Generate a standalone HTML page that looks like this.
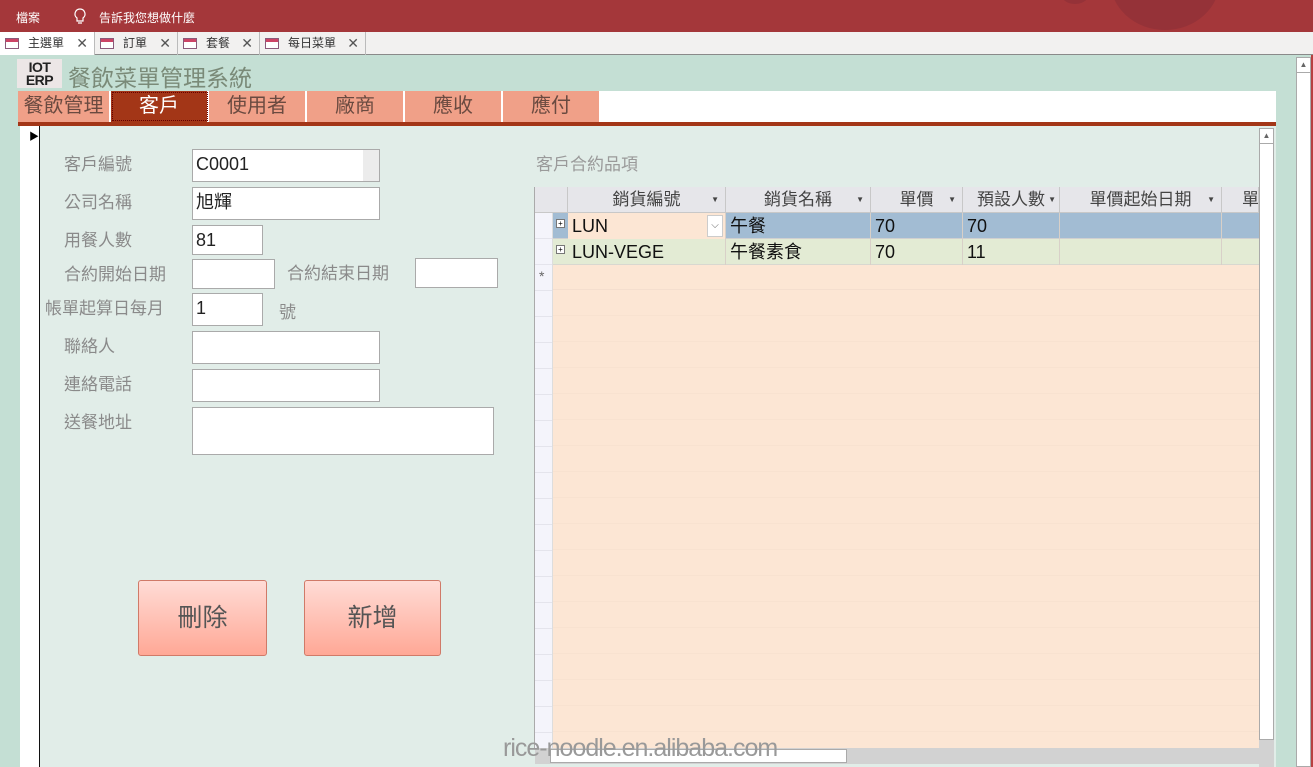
<!DOCTYPE html>
<html><head><meta charset="utf-8"><style>
*{box-sizing:border-box;margin:0;padding:0}
body{width:1313px;height:767px;overflow:hidden;background:#c4dfd4;font-family:"Liberation Sans","Noto Sans CJK TC",sans-serif;position:relative}
.a{position:absolute}
.top{left:0;top:0;width:1313px;height:32px;background:#a4373a;color:#fff;font-size:12px}
.tabs{left:0;top:32px;width:1313px;height:23px;background:#f2f1f0;border-bottom:1px solid #8a8a8a}
.dt{top:0;height:23px;border-right:1px solid #bbb;font-size:12px;color:#333;line-height:23px;padding-left:28px}
.dt i{position:absolute;left:5px;top:6px;width:14px;height:11px;border:1px solid #8a5a7a;background:linear-gradient(#c46 0 3px,#fff 3px)}
.dt b{position:absolute;right:6px;top:0;font-weight:normal;color:#555;font-size:14px}
.ft{top:91px;height:31px;background:#f0a088;color:#6a4a40;font-size:20px;text-align:center;line-height:30px;border-right:2px solid #fff}
.lab{color:#8a8a8a;font-size:17px}
.in{background:#fff;border:1px solid #aaa;font-size:18px;color:#222;padding-left:3px;line-height:28px}
.hd{top:187px;height:26px;background:#e6e6ea;border-right:1px solid #c8c8c8;border-bottom:1px solid #c8c8c8;font-size:17px;color:#444;text-align:center;line-height:26px}
.hd s{position:absolute;right:6px;top:0;text-decoration:none;font-size:8px;color:#444}
.c{font-size:18px;color:#111;line-height:26px;padding-left:4px;border-right:1px solid #d8d0c8}
.btn{top:580px;height:76px;border:1px solid #d07a68;border-radius:3px;background:linear-gradient(#ffdcd6,#ffa896);color:#555;font-size:25px;text-align:center;line-height:74px}
</style></head><body>
<div class="a top">
 <span class="a" style="left:16px;top:9px">檔案</span>
 <svg class="a" style="left:73px;top:8px" width="14" height="17" viewBox="0 0 14 17"><path d="M7 1a5 5 0 0 0-3 9v3h6v-3a5 5 0 0 0-3-9zM5 15h4" fill="none" stroke="#fff" stroke-width="1.2"/></svg>
 <span class="a" style="left:99px;top:9px">告訴我您想做什麼</span>
 <div class="a" style="left:1110px;top:-70px;width:110px;height:100px;border-radius:50%;background:#953238"></div>
 <div class="a" style="left:1060px;top:-20px;width:30px;height:24px;border-radius:50%;border:4px solid #953238"></div>
</div>
<div class="a tabs">
 <div class="a dt" style="left:0;width:95px;background:#fff"><i></i>主選單<b>✕</b></div>
 <div class="a dt" style="left:95px;width:83px"><i></i>訂單<b>✕</b></div>
 <div class="a dt" style="left:178px;width:82px"><i></i>套餐<b>✕</b></div>
 <div class="a dt" style="left:260px;width:106px"><i></i>每日菜單<b>✕</b></div>
</div>
<div class="a" style="left:17px;top:59px;width:45px;height:29px;background:#ece6e6;font:bold 14px/13px 'Liberation Sans',sans-serif;color:#222;text-align:center;padding-top:2px;letter-spacing:-0.5px">IOT<br>ERP</div>
<div class="a" style="left:68px;top:59px;font-size:23px;color:#7a8a78">餐飲菜單管理系統</div>
<div class="a" style="left:1296px;top:57px;width:15px;height:710px;background:#fff;border:1px solid #aaa"></div>
<div class="a" style="left:1296px;top:57px;width:15px;height:16px;border:1px solid #aaa;background:#fff;font-size:8px;text-align:center;color:#666;line-height:14px">▲</div>
<div class="a" style="left:1311px;top:55px;width:2px;height:712px;background:#b84040"></div>
<div class="a" style="left:18px;top:91px;width:1258px;height:31px;background:#fff"></div>
<div class="a ft" style="left:18px;width:93px">餐飲管理</div>
<div class="a ft" style="left:111px;width:98px;background:#a33617;color:#fff;outline:1px dotted #600;outline-offset:-2px">客戶</div>
<div class="a ft" style="left:209px;width:98px">使用者</div>
<div class="a ft" style="left:307px;width:98px">廠商</div>
<div class="a ft" style="left:405px;width:98px">應收</div>
<div class="a ft" style="left:503px;width:98px">應付</div>
<div class="a" style="left:18px;top:122px;width:1258px;height:4px;background:#a33617"></div>
<div class="a" style="left:20px;top:126px;width:1256px;height:641px;background:#e1ede8"></div>
<div class="a" style="left:20px;top:126px;width:20px;height:641px;background:#fff;border-right:1px solid #111"></div>
<div class="a" style="left:29px;top:128px;font-size:10px">▶</div>
<div class="a lab" style="left:64px;top:150px">客戶編號</div>
<div class="a in" style="left:192px;top:149px;width:188px;height:33px">C0001<span class="a" style="right:0;top:0;width:16px;height:31px;background:#ececec"></span></div>
<div class="a lab" style="left:64px;top:188px">公司名稱</div>
<div class="a in" style="left:192px;top:187px;width:188px;height:33px">旭輝</div>
<div class="a lab" style="left:64px;top:226px">用餐人數</div>
<div class="a in" style="left:192px;top:225px;width:71px;height:30px">81</div>
<div class="a lab" style="left:64px;top:260px">合約開始日期</div>
<div class="a in" style="left:192px;top:259px;width:83px;height:30px"></div>
<div class="a lab" style="left:287px;top:259px">合約結束日期</div>
<div class="a in" style="left:415px;top:258px;width:83px;height:30px"></div>
<div class="a lab" style="left:45px;top:294px">帳單起算日每月</div>
<div class="a in" style="left:192px;top:293px;width:71px;height:33px">1</div>
<div class="a lab" style="left:279px;top:298px">號</div>
<div class="a lab" style="left:64px;top:332px">聯絡人</div>
<div class="a in" style="left:192px;top:331px;width:188px;height:33px"></div>
<div class="a lab" style="left:64px;top:370px">連絡電話</div>
<div class="a in" style="left:192px;top:369px;width:188px;height:33px"></div>
<div class="a lab" style="left:64px;top:408px">送餐地址</div>
<div class="a in" style="left:192px;top:407px;width:302px;height:48px"></div>
<div class="a btn" style="left:138px;width:129px">刪除</div>
<div class="a btn" style="left:304px;width:137px">新增</div>
<div class="a" style="left:536px;top:150px;font-size:17px;color:#9a9a9a">客戶合約品項</div>
<div class="a" style="left:534px;top:187px;width:726px;height:562px;background:#fce6d4;border:1px solid #aaa"></div>
<div class="a" style="left:535px;top:213px;width:18px;height:535px;background:repeating-linear-gradient(#f4f4fb 0 25px,#e4e4ec 25px 26px);border-right:1px solid #ddd"></div>
<div class="a" style="left:553px;top:290px;width:706px;height:458px;background:repeating-linear-gradient(#fce6d4 0 25px,#f8e2d0 25px 26px)"></div>
<div class="a hd" style="left:535px;width:33px"></div>
<div class="a hd" style="left:568px;width:158px">銷貨編號<s>▼</s></div>
<div class="a hd" style="left:726px;width:145px">銷貨名稱<s>▼</s></div>
<div class="a hd" style="left:871px;width:92px">單價<s>▼</s></div>
<div class="a hd" style="left:963px;width:97px">預設人數<s style="right:3px">▼</s></div>
<div class="a hd" style="left:1060px;width:162px">單價起始日期<s>▼</s></div>
<div class="a hd" style="left:1222px;width:37px;text-align:left;padding-left:20px;overflow:hidden">單</div>
<div class="a" style="left:553px;top:213px;width:706px;height:26px;background:#a2bcd3;border-bottom:1px solid #d0d0d0"></div>
<div class="a c" style="left:568px;top:213px;width:158px;height:26px;background:#fce6d4">LUN<span class="a" style="right:2px;top:2px;width:16px;height:22px;background:#fff;border:1px solid #ccc;font-size:10px;line-height:20px;text-align:center;color:#666">⌵</span></div>
<div class="a c" style="left:726px;top:213px;width:145px;height:26px">午餐</div>
<div class="a c" style="left:871px;top:213px;width:92px;height:26px">70</div>
<div class="a c" style="left:963px;top:213px;width:97px;height:26px">70</div>
<div class="a c" style="left:1060px;top:213px;width:162px;height:26px"></div>
<div class="a" style="left:553px;top:239px;width:706px;height:26px;background:#e3ebd4;border-bottom:1px solid #d8d8d0"></div>
<div class="a c" style="left:568px;top:239px;width:158px;height:26px">LUN-VEGE</div>
<div class="a c" style="left:726px;top:239px;width:145px;height:26px">午餐素食</div>
<div class="a c" style="left:871px;top:239px;width:92px;height:26px">70</div>
<div class="a c" style="left:963px;top:239px;width:97px;height:26px">11</div>
<div class="a c" style="left:1060px;top:239px;width:162px;height:26px"></div>
<div class="a" style="left:556px;top:219px;width:9px;height:9px;border:1px solid #777;background:#fff;font-size:8px;line-height:7px;text-align:center">+</div>
<div class="a" style="left:556px;top:245px;width:9px;height:9px;border:1px solid #777;background:#fff;font-size:8px;line-height:7px;text-align:center">+</div>
<div class="a" style="left:539px;top:268px;font-size:14px;color:#666">*</div>
<div class="a" style="left:553px;top:265px;width:706px;height:25px;border-bottom:1px solid #f4dece"></div>
<div class="a" style="left:535px;top:748px;width:724px;height:16px;background:#d2d2d2"></div>
<div class="a" style="left:550px;top:749px;width:297px;height:14px;background:#fff;border:1px solid #aaa"></div>
<div class="a" style="left:1259px;top:128px;width:15px;height:612px;background:#fff;border:1px solid #aaa"></div>
<div class="a" style="left:1259px;top:128px;width:15px;height:16px;border:1px solid #aaa;font-size:8px;text-align:center;color:#666;line-height:14px">▲</div>
<div class="a" style="left:1259px;top:740px;width:15px;height:27px;background:#d2d2d2"></div>
<div class="a" style="left:503px;top:734px;font-size:25px;color:#999;letter-spacing:-1px">rice-noodle.en.alibaba.com</div>
</body></html>
